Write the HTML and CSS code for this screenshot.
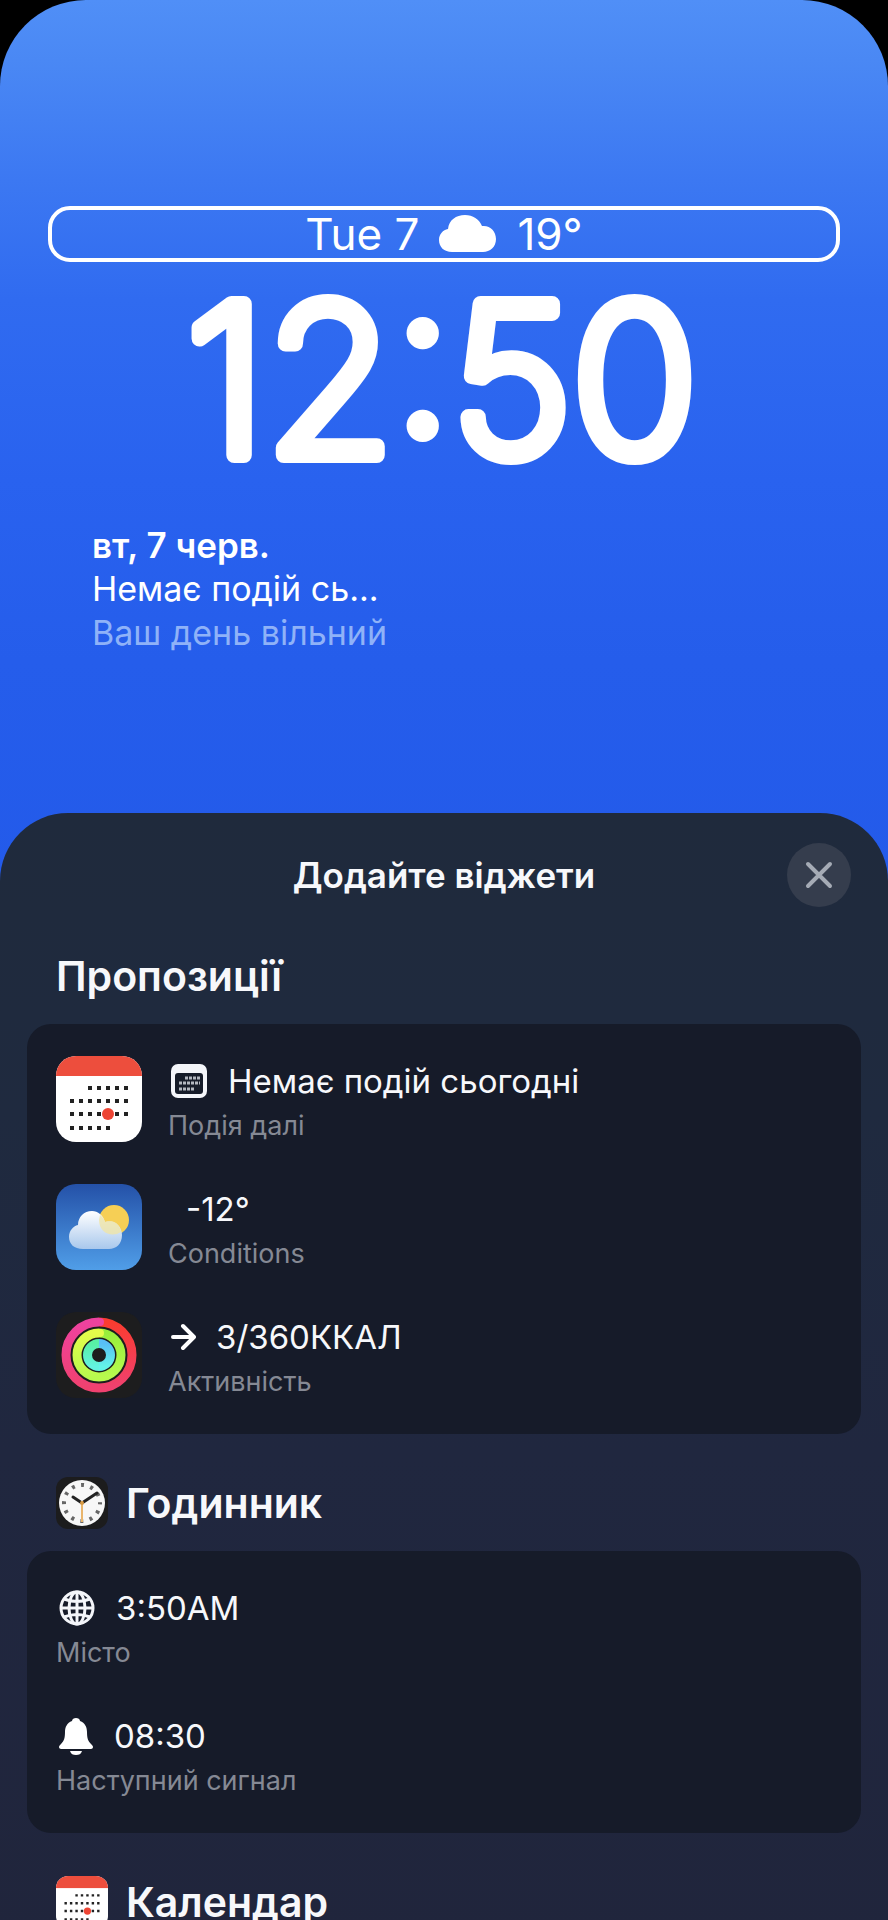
FILE: index.html
```html
<!DOCTYPE html>
<html lang="uk">
<head>
<meta charset="utf-8">
<meta name="viewport" content="width=device-width, initial-scale=1">
<title>Додайте віджети</title>
<link rel="stylesheet" href="styles.css">
</head>
<body>
<svg class="defs" width="0" height="0" aria-hidden="true">
  <defs>
    <linearGradient id="sky" x1="0" y1="0" x2="0" y2="1"><stop offset="0" stop-color="#2451a8"/><stop offset="1" stop-color="#509ee8"/></linearGradient>
    <linearGradient id="cloudFill" x1="0" y1="0" x2="0" y2="1"><stop offset="0" stop-color="#ffffff"/><stop offset="1" stop-color="#a9c8ec"/></linearGradient>
    <linearGradient id="moveL" x1="0" y1="0" x2="0" y2="1"><stop offset="0" stop-color="#ee429f"/><stop offset="1" stop-color="#f0416f"/></linearGradient>
    <linearGradient id="moveR" x1="0" y1="0" x2="0" y2="1"><stop offset="0" stop-color="#fa3c30"/><stop offset="1" stop-color="#f0416f"/></linearGradient>
    <linearGradient id="exL" x1="0" y1="0" x2="0" y2="1"><stop offset="0" stop-color="#e4fc4a"/><stop offset="1" stop-color="#b8fa4e"/></linearGradient>
    <linearGradient id="exR" x1="0" y1="0" x2="0" y2="1"><stop offset="0" stop-color="#98ee3c"/><stop offset="1" stop-color="#b8fa4e"/></linearGradient>
    <linearGradient id="stL" x1="0" y1="0" x2="0" y2="1"><stop offset="0" stop-color="#58efa5"/><stop offset="1" stop-color="#63f3e0"/></linearGradient>
    <linearGradient id="stR" x1="0" y1="0" x2="0" y2="1"><stop offset="0" stop-color="#58bff5"/><stop offset="1" stop-color="#63f3e8"/></linearGradient>
    <clipPath id="tile"><rect width="86" height="86" rx="20"/></clipPath>
    <symbol id="calendar" viewBox="0 0 86 86">
      <g clip-path="url(#tile)"><rect width="86" height="86" fill="#fff"/><rect width="86" height="20" fill="#ed4e3d"/></g>
      <g stroke="#222" stroke-width="4" stroke-dasharray="4 5" fill="none">
        <path d="M32 32H72M14 45H72M14 58H72M14 72H55"/>
      </g>
      <circle cx="52" cy="58" r="6" fill="#ed4534"/>
    </symbol>
  </defs>
</svg>
<main class="screen">
  <section class="lock">
    <button class="date-slot" type="button">
      <span>Tue 7</span>
      <svg class="cloud" viewBox="0 0 58 38" aria-hidden="true"><path fill="#fff" d="M13 37C5 37 0 32 0 25C0 19 4 15 9 14C10 5 17 0 26 0C34 0 40 4 43 11C51 10 57 16 57 24C57 32 51 37 44 37Z"/></svg>
      <span>19°</span>
    </button>
    <svg class="clock" viewBox="0 0 600 234" role="img" aria-label="12:50"><text x="298" y="193" text-anchor="middle">12:50</text></svg>
    <div class="agenda">
      <p class="agenda-day">вт, 7 черв.</p>
      <p>Немає подій сь...</p>
      <p class="agenda-note">Ваш день вільний</p>
    </div>
  </section>

  <section class="sheet">
    <header class="sheet-head">
      <h1 class="sheet-title">Додайте віджети</h1>
      <button class="close" type="button" aria-label="Закрити">
        <svg viewBox="0 0 64 64" aria-hidden="true"><path d="M21 21L43 43M43 21L21 43" stroke="#a5abb5" stroke-width="4" stroke-linecap="round"/></svg>
      </button>
    </header>

    <h2 class="group-title">Пропозиції</h2>
    <div class="panel">
      <button class="row" type="button">
        <svg class="app" viewBox="0 0 86 86" aria-hidden="true"><use href="#calendar"/></svg>
        <span class="text">
          <span class="main">
            <svg class="glyph" viewBox="0 0 38 38" aria-hidden="true"><rect x="1" y="2" width="36" height="34" rx="7" fill="#f4f6fa"/><rect x="5" y="11" width="28" height="21" rx="3" fill="#161c29"/><path d="M15 16H30M9 21H30M9 27H25" stroke="#b3b8c0" stroke-width="3" stroke-dasharray="3 1"/></svg>
            <span>Немає подій сьогодні</span>
          </span>
          <span class="sub">Подія далі</span>
        </span>
      </button>
      <button class="row" type="button">
        <svg class="app" viewBox="0 0 86 86" aria-hidden="true">
          <rect width="86" height="86" rx="20" fill="url(#sky)"/>
          <circle cx="58" cy="36" r="15" fill="#f6cf55"/>
          <path fill="url(#cloudFill)" d="M27 65C18 65 13 60 13 53C13 47 17 42 22 41C22 33 28 27 36 27C42 27 47 31 49 38C58 35 66 42 66 51C66 60 60 65 53 65Z"/>
          <path fill="#efe5a8" opacity=".8" d="M44 31C47 33 48 35 49 38C57 35 64 40 65 48C56 54 43 49 43 36Z"/>
        </svg>
        <span class="text">
          <span class="main main-indent">-12°</span>
          <span class="sub">Conditions</span>
        </span>
      </button>
      <button class="row" type="button">
        <svg class="app" viewBox="0 0 86 86" fill="none" aria-hidden="true">
          <rect width="86" height="86" rx="20" fill="#1d1d1e"/>
          <g stroke-width="9">
            <path d="M43 76A33 33 0 0 1 43 10" stroke="url(#moveL)"/><path d="M43 10A33 33 0 0 1 43 76" stroke="url(#moveR)"/>
            <path d="M43 65A22 22 0 0 1 43 21" stroke="url(#exL)"/><path d="M43 21A22 22 0 0 1 43 65" stroke="url(#exR)"/>
            <path d="M43 54.500A11.500 11.500 0 0 1 43 31.500" stroke="url(#stL)"/><path d="M43 31.500A11.500 11.500 0 0 1 43 54.500" stroke="url(#stR)"/>
          </g>
          <circle cx="44" cy="10" r="4" fill="#ee429f"/><circle cx="44" cy="21" r="4" fill="#e4fc4a"/>
        </svg>
        <span class="text">
          <span class="main">
            <svg class="glyph glyph-arrow" viewBox="0 0 26 38" fill="none" aria-hidden="true"><path d="M3 19H23M13 8L24 19L13 30" stroke="#fff" stroke-width="4" stroke-linecap="round" stroke-linejoin="round"/></svg>
            <span>3/360ККАЛ</span>
          </span>
          <span class="sub">Активність</span>
        </span>
      </button>
    </div>

    <h2 class="group-title">
      <svg class="app-small" viewBox="0 0 52 52" aria-hidden="true">
        <rect width="52" height="52" rx="12" fill="#1c1c1d"/>
        <circle cx="26" cy="26" r="23" fill="#f7f7f7"/>
        <circle cx="26" cy="26" r="18" fill="none" stroke="#666" stroke-width="4" stroke-dasharray="3 6.425" stroke-dashoffset="1.500"/>
        <path d="M26 26L17 20M26 26L41 16" stroke="#222" stroke-width="3" stroke-linecap="round"/>
        <path d="M26 24V45" stroke="#e9b56c" stroke-width="2"/><circle cx="26" cy="26" r="2" fill="#d99b45"/>
      </svg>
      <span>Годинник</span>
    </h2>
    <div class="panel">
      <button class="row" type="button">
        <span class="text">
          <span class="main">
            <svg class="glyph" viewBox="0 0 38 38" fill="none" aria-hidden="true"><g stroke="#f4f6fa" stroke-width="3"><circle cx="19" cy="19" r="16"/><ellipse cx="19" cy="19" rx="8" ry="16"/><path d="M19 3V35M3 19H35M6 10Q19 15 32 10M6 28Q19 23 32 28"/></g></svg>
            <span>3:50AM</span>
          </span>
          <span class="sub">Місто</span>
        </span>
      </button>
      <button class="row" type="button">
        <span class="text">
          <span class="main">
            <svg class="glyph glyph-bell" viewBox="0 0 36 38" aria-hidden="true"><path fill="#fff" d="M18 1C20 1 22 2 22 4C27 6 29 10 29 15C29 21 30 24 33 27C34 28 35 29 35 30C35 31 34 32 33 32H3C2 32 1 31 1 30C1 29 2 28 3 27C6 24 7 21 7 15C7 10 9 6 14 4C14 2 16 1 18 1ZM12 34H24C23 37 21 38 18 38C15 38 13 37 12 34Z"/></svg>
            <span>08:30</span>
          </span>
          <span class="sub">Наступний сигнал</span>
        </span>
      </button>
    </div>

    <h2 class="group-title">
      <svg class="app-small" viewBox="0 0 86 86" aria-hidden="true"><use href="#calendar"/></svg>
      <span>Календар</span>
    </h2>
  </section>
</main>
</body>
</html>
```
FILE: styles.css
```css
* {
  box-sizing: border-box;
}

body {
  margin: 0;
  background: #000;
  color: #f7f8fb;
  font-family: Inter, "Liberation Sans", sans-serif;
}

h1, h2, p {
  margin: 0;
}

button {
  padding: 0;
  border: 0;
  background: none;
  color: inherit;
  font: inherit;
  text-align: left;
}

svg {
  display: block;
  flex: none;
}

.defs {
  position: absolute;
}

.screen {
  display: flex;
  flex-direction: column;
  height: 100vh;
  overflow: hidden;
  border-radius: 86px 86px 0 0;
  background: linear-gradient(#508ff7 0, #4a88f4 60px, #3c78f2 180px, #306bf0 300px, #2962ef 480px, #255deb 660px, #235aea 900px);
}

.lock {
  display: flex;
  flex-direction: column;
  padding: 206px 48px 158px;
}

.date-slot {
  display: flex;
  align-items: center;
  justify-content: center;
  gap: 20px;
  border: 4px solid #fff;
  border-radius: 22px;
  color: #fff;
  font-size: 44px;
  font-weight: 400;
  line-height: 48px;
}

.cloud {
  width: 58px;
  height: 38px;
}

.clock {
  align-self: center;
  width: 600px;
  height: 234px;
  overflow: visible;
  fill: #fff;
  stroke: #fff;
  stroke-width: 16px;
  stroke-linejoin: round;
  font-size: 208px;
  font-weight: 200;
  font-variation-settings: "opsz" 14;
}

.agenda {
  padding: 27px 44px 0;
  color: #fff;
  font-size: 34px;
  line-height: 44px;
}

.agenda-day {
  font-size: 35px;
  font-weight: 600;
}

.agenda-note {
  color: #8fb2f8;
}

.sheet {
  flex: 1 0 auto;
  padding: 0 27px;
  border-radius: 68px 68px 0 0;
  background: linear-gradient(#1f2a3c 0, #1f2a3f 300px, #20273f 640px, #20253c 100%);
}

.sheet-head {
  display: grid;
  grid-template-columns: 64px 1fr 64px;
  align-items: center;
  padding: 30px 10px 0;
}

.sheet-title {
  grid-column: 2;
  font-size: 35px;
  font-weight: 600;
  line-height: 64px;
  text-align: center;
}

.close {
  width: 64px;
  height: 64px;
  border-radius: 50%;
  background: #353d4d;
}

.group-title {
  display: flex;
  align-items: center;
  gap: 18px;
  padding: 43px 29px 22px;
  font-size: 41px;
  font-weight: 600;
  line-height: 52px;
}

.app-small {
  width: 52px;
  height: 52px;
}

.panel {
  display: flex;
  flex-direction: column;
  gap: 38px;
  padding: 30px 29px 34px;
  border-radius: 24px;
  background: #161b29;
}

.row {
  display: flex;
  align-items: center;
  gap: 26px;
}

.app {
  width: 86px;
  height: 86px;
}

.text {
  display: flex;
  flex-direction: column;
}

.main {
  display: flex;
  align-items: center;
  gap: 20px;
  padding-left: 2px;
  font-size: 33px;
  line-height: 54px;
}

.main-indent {
  padding-left: 18px;
}

.sub {
  color: #858994;
  font-size: 27px;
  line-height: 36px;
}

.glyph {
  width: 38px;
  height: 38px;
}

.glyph-arrow {
  width: 26px;
}

.glyph-bell {
  width: 36px;
}
```
